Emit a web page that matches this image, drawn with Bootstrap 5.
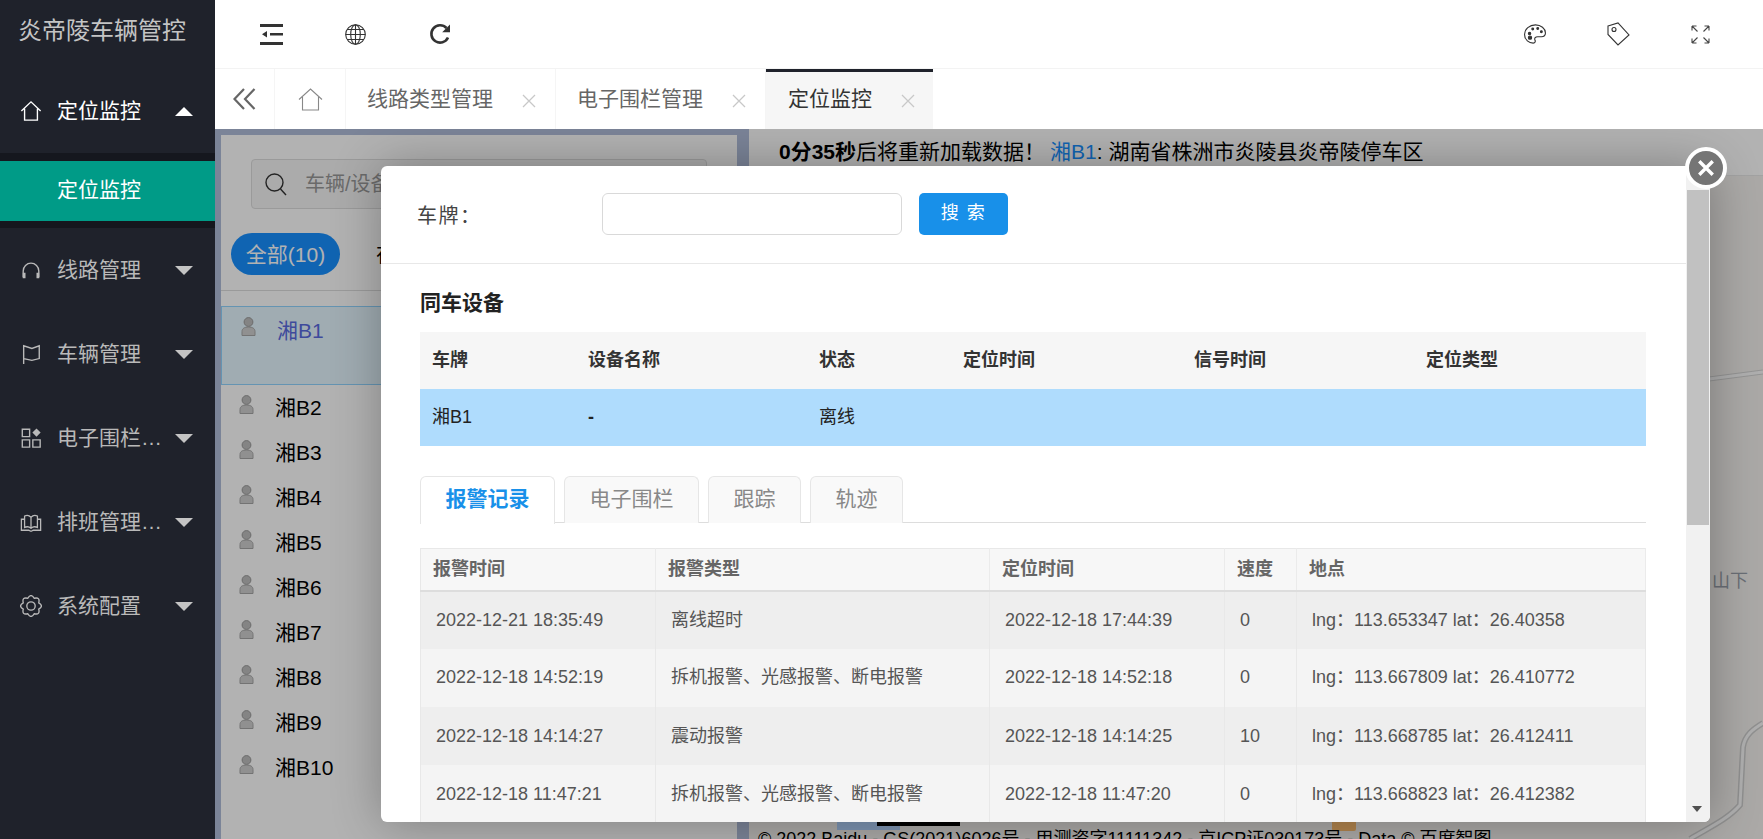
<!DOCTYPE html>
<html lang="zh-CN">
<head>
  <meta charset="UTF-8" />
  <title>炎帝陵车辆管控</title>
  <link href="https://cdn.jsdelivr.net/npm/bootstrap@5.3.3/dist/css/bootstrap.min.css" rel="stylesheet" />
  <style>
    html, body { height: 100%; }
    body {
      font-family: "Liberation Sans", "Noto Sans CJK SC", sans-serif;
      font-size: 18px;
      color: #333;
      overflow: hidden;
      background: #fff;
    }
    svg { display: block; flex: none; }

    /* 侧边栏 */
    .sidebar { width: 215px; flex: none; background: #1f222b; }
    .logo { height: 69px; padding-left: 18px; line-height: 62px; font-size: 24px; color: #c4c4c4; white-space: nowrap; }
    .menu-item { height: 84px; padding: 0 22px 0 20px; color: #b9b9b9; font-size: 21px; }
    .menu-item.open { color: #fff; }
    .menu-item .label { width: 108px; margin-left: 15px; white-space: nowrap; overflow: hidden; text-overflow: ellipsis; }
    .caret { width: 0; height: 0; margin-left: auto; border-left: 9px solid transparent; border-right: 9px solid transparent; border-top: 9px solid #c4c4c4; }
    .caret.up { border-top: 0; border-bottom: 9px solid #fff; }
    .submenu { background: #15171e; padding: 8px 0 7px; }
    .submenu a { display: block; height: 60px; line-height: 58px; padding-left: 57px; background: #009b87; color: #fff; font-size: 21px; text-decoration: none; }

    /* 顶部 */
    .topbar { height: 69px; flex: none; border-bottom: 1px solid #f3f3f3; padding: 0 53px 0 45px; }
    .topbar .tool { width: 84px; }
    .topbar .tool.first { width: 85px; }
    .tabbar { height: 60px; flex: none; font-size: 21px; color: #666; }
    .tabbar .cell { width: 60px; border-right: 1px solid #f5f5f5; }
    .tabbar .cell.home { width: 71px; }
    .page-tab { padding: 0 19px 0 21px; border-right: 1px solid #f5f5f5; white-space: nowrap; }
    .page-tab.active { padding: 0 18px 3px 22px; background: #f6f6f6; color: #333; border-right: 0; border-top: 3px solid #1f222b; }
    .page-tab .x { margin-left: 29px; margin-top: 4px; }

    /* 内容区 */
    .content { background: #b0bdda; min-height: 0; }
    .left-panel { width: 516px; flex: none; margin: 6px 12px -20px 6px; background: #fff; }
    .search-box { margin: 24px 30px 0; height: 50px; padding-left: 13px; background: #f5f5f5; border: 1px solid #ddd; border-radius: 4px; }
    .search-box input { border: 0; background: transparent; padding: 0 0 0 18px; font-size: 20px; box-shadow: none; }
    .search-box input::placeholder { color: #999; }
    .status-pills { margin: 24px 0 0 10px; height: 42px; font-size: 21px; }
    .status-pills .nav-link { padding: 0; color: #000; }
    .status-pills .nav-link.active { width: 109px; height: 42px; line-height: 43px; text-align: center; border-radius: 21px; background: #1890ff; color: #fff; margin-right: 36px; }
    .car-list { margin-top: 15px; border-top: 1px solid #ddd; padding-top: 15px; font-size: 21px; color: #000; }
    .car-row { height: 45px; line-height: 46px; padding-left: 18px; gap: 21px; }
    .car-row svg { margin-top: 10px; }
    .car-row.selected { height: 79px; background: #e6f7ff; border: 1px solid #91d5ff; padding-left: 19px; line-height: 47px; color: #5a6be0; }

    .map-panel { background: #f5f3ef; min-width: 0; }
    .info-bar { height: 47px; line-height: 46px; padding-left: 30px; font-size: 21px; color: #000; background: #fff; border-bottom: 1px solid #e8e8e8; white-space: nowrap; }
    .info-bar a { color: #1890ff; text-decoration: none; margin-left: 5px; }
    .map-label { position: absolute; left: 963px; top: 439px; font-size: 18px; color: #99a0aa; }
    .map-copy { position: absolute; left: 9px; top: 698px; font-size: 18px; line-height: 24px; color: #000; white-space: nowrap; }
    .map-layer { position: absolute; left: 0; top: 0; }

    /* 弹层 */
    .backdrop { position: absolute; inset: 0; background: rgba(0, 0, 0, .3); }
    .dialog {
      position: absolute; left: 166px; top: 37px; width: 1329px; height: 656px;
      background: #fff; border-radius: 6px; box-shadow: 1px 1px 50px rgba(0, 0, 0, .3);
    }
    .dialog-inner { height: 100%; overflow: hidden; border-radius: 6px; }
    .dialog-body { width: 1305px; flex: none; overflow: hidden; }
    .fake-scroll { width: 24px; flex: none; background: #f1f1f1; padding: 24px 1px 0; position: relative; }
    .fake-scroll .thumb { height: 335px; background: #c1c1c1; }
    .fake-scroll .arrow { position: absolute; left: 6px; bottom: 10px; width: 0; height: 0; border-left: 5px solid transparent; border-right: 5px solid transparent; border-top: 6px solid #505050; }
    .close-btn {
      position: absolute; right: -17px; top: -19px; width: 42px; height: 42px; padding: 0;
      background: #757575; border: 4px solid #fff; border-radius: 50%;
    }
    .query-row { height: 98px; padding-left: 36px; border-bottom: 1px solid #e8e8e8; padding-bottom: 2px; }
    .query-row label { width: 185px; margin-top: 4px; font-size: 20px; letter-spacing: 1.5px; color: #444; }
    .query-row input { width: 300px; height: 42px; border: 1px solid #d9d9d9; border-radius: 6px; }
    .query-row .btn { width: 89px; height: 42px; margin-left: 17px; padding: 0; background: #1890e9; border: 0; border-radius: 5px; font-size: 18px; letter-spacing: 1.5px; color: #fff; }
    .section { padding: 0 40px 0 39px; }
    .section h6 { margin: 0; height: 68px; line-height: 77px; font-size: 21px; font-weight: 700; color: #222; }

    .device-table { table-layout: fixed; margin: 0; --bs-table-bg: transparent; }
    .device-table th, .device-table td { height: 57px; padding: 0 12px; vertical-align: middle; border: 0; font-size: 18px; color: #333; }
    .device-table th { background: #f6f6f6; font-weight: 700; }
    .device-table td { background: #afdcfd; color: #222; }
    .c1 { width: 156px; } .c2 { width: 231px; } .c3 { width: 144px; } .c4 { width: 231px; } .c5 { width: 232px; }

    .detail-tabs { margin-top: 30px; height: 47px; gap: 9px; border-bottom: 1px solid #ddd; flex-wrap: nowrap; }
    .detail-tabs .nav-link {
      height: 47px; padding: 0 24.5px; line-height: 44px; font-size: 21px; color: #888;
      background: #f9f9f9; border: 1px solid #e6e6e6; border-bottom: 0; border-radius: 6px 6px 0 0; margin: 0;
    }
    .detail-tabs .nav-link.active { height: 48px; background: #fff; color: #1890e9; font-weight: 700; border-color: #e6e6e6; }

    .alarm-table { table-layout: fixed; margin: 25px 0 0; --bs-table-bg: transparent; border: 1px solid #e8e8e8; }
    .alarm-table th { height: 42px; padding: 0 12px; vertical-align: middle; background: #f7f7f7; font-size: 18px; color: #666; font-weight: 700; border: 0; border-right: 1px solid #ebebeb; border-bottom: 2px solid #ddd; }
    .alarm-table td { height: 58.3px; padding: 0 15px; vertical-align: middle; font-size: 18px; color: #555; border: 0; border-right: 1px solid #e8e8e8; white-space: nowrap; }
    .alarm-table tbody tr:nth-child(odd) td { background: #eee; }
    .alarm-table tbody tr:nth-child(even) td { background: #f4f4f4; }
    .a1 { width: 235px; } .a2 { width: 334px; } .a3 { width: 235px; } .a4 { width: 72px; }
  </style>
</head>
<body>
  <svg width="0" height="0" class="position-absolute">
    <symbol id="person" viewBox="0 0 14 19">
      <circle cx="7" cy="5" r="4.4" fill="#bdbdbd" stroke="#999" />
      <path d="M.5 18.500v-4c0-3 2.500-4.500 6.500-4.500s6.500 1.500 6.500 4.500v4z" fill="#cfcfcf" stroke="#a5a5a5" />
    </symbol>
    <symbol id="tab-x" viewBox="0 0 14 14">
      <path d="M1 1l12 12M13 1L1 13" stroke="#c8c8c8" stroke-width="1.300" fill="none" />
    </symbol>
  </svg>

  <div class="d-flex h-100">
    <aside class="sidebar">
      <div class="logo">炎帝陵车辆管控</div>
      <nav class="d-flex flex-column">
        <div class="menu-item open d-flex align-items-center">
          <svg width="22" height="22" viewBox="0 0 24 24" fill="none" stroke="currentColor" stroke-width="1.500"><path d="M1.500 12L12 2l10.500 10M5 9.500V22h14V9.500" /></svg>
          <span class="label">定位监控</span><span class="caret up"></span>
        </div>
        <div class="submenu"><a href="#">定位监控</a></div>
        <div class="menu-item d-flex align-items-center">
          <svg width="22" height="22" viewBox="0 0 24 24" fill="none" stroke="currentColor" stroke-width="1.500"><path d="M3.500 20v-7a8.500 8.500 0 0 1 17 0v7" /><path d="M3 15h3v6H3zM18 15h3v6h-3z" fill="currentColor" stroke="none" /></svg>
          <span class="label">线路管理</span><span class="caret"></span>
        </div>
        <div class="menu-item d-flex align-items-center">
          <svg width="22" height="22" viewBox="0 0 24 24" fill="none" stroke="currentColor" stroke-width="1.500"><path d="M4 23V3l9 3 8-3v14l-8 2-9-2" /></svg>
          <span class="label">车辆管理</span><span class="caret"></span>
        </div>
        <div class="menu-item d-flex align-items-center">
          <svg width="22" height="22" viewBox="0 0 24 24" fill="none" stroke="currentColor" stroke-width="1.500"><path d="M2.500 2.500h8v8h-8zM2.500 14h8v8h-8zM14 14h8v8h-8z" /><path d="M18 1.500l4.500 4.500-4.500 4.500L13.500 6z" fill="currentColor" stroke="none" /></svg>
          <span class="label">电子围栏管理</span><span class="caret"></span>
        </div>
        <div class="menu-item d-flex align-items-center">
          <svg width="22" height="22" viewBox="0 0 24 24" fill="none" stroke="currentColor" stroke-width="1.400"><path d="M12 7C10 4.500 7 4.500 5 5.500V18c2-1 5-1 7 1 2-2 5-2 7-1V5.500c-2-1-5-1-7 1.500zM12 7v12M5 9H1.500v12h8c1 0 1.500 1 2.500 1s1.500-1 2.500-1h8V9H19" /></svg>
          <span class="label">排班管理配置</span><span class="caret"></span>
        </div>
        <div class="menu-item d-flex align-items-center">
          <svg width="22" height="22" viewBox="1.500 1.500 21 21" fill="none" stroke="currentColor" stroke-width="1.300"><path d="M19.390 8.940Q24.500 12 19.390 15.060 20.840 20.840 15.060 19.390 12 24.500 8.940 19.390 3.160 20.840 4.610 15.060-.5 12 4.610 8.940 3.160 3.160 8.940 4.610 12-.5 15.060 4.610 20.840 3.160 19.390 8.940Z" /><circle cx="12" cy="12" r="4" /></svg>
          <span class="label">系统配置</span><span class="caret"></span>
        </div>
      </nav>
    </aside>

    <main class="flex-grow-1 d-flex flex-column" id="main">
      <header class="topbar d-flex align-items-center">
        <div class="tool first">
          <svg width="23" height="21" viewBox="0 0 23 21" fill="#333"><path d="M0 0h23v3H0zM0 18h23v3H0zM10 9h13v2.500H10zM2 10.300L7 7v6.500z" /></svg>
        </div>
        <div class="tool">
          <svg width="21" height="21" viewBox="0 0 21 21" fill="none" stroke="#333" stroke-width="1.100"><circle cx="10.500" cy="10.500" r="9.800" /><ellipse cx="10.500" cy="10.500" rx="4.800" ry="9.800" /><path d="M10.500.7v19.600M.7 10.500h19.600M2 5.500h17M2 15.500h17" /></svg>
        </div>
        <div class="tool">
          <svg width="23" height="23" viewBox="0 0 23 23" fill="none" stroke="#333" stroke-width="2.600"><path d="M19 14.500A8.700 8.700 0 1 1 17.500 5" /><path d="M21 1.500v7.800h-7.800z" fill="#333" stroke="none" /></svg>
        </div>
        <div class="ms-auto d-flex align-items-center">
          <div class="tool">
            <svg width="24" height="20" viewBox="0 0 25 22" fill="none" stroke="#333" stroke-width="1.200"><path d="M13 1C6.500 1 1 5.500 1 11.500S6 21 10.500 21c2.500 0 2.500-2 2-3-1-2.500.5-4 3-4h4c3 0 4.500-1.500 4.500-4C24 5 19 1 13 1z" /><circle cx="6.500" cy="10.500" r="1.300" fill="#333" /><circle cx="10" cy="5.500" r="1" fill="#333" /><circle cx="15.500" cy="5" r="1" fill="#333" /><circle cx="19.500" cy="8.500" r="1" fill="#333" /><circle cx="7" cy="15" r="1.800" fill="#333" /></svg>
          </div>
          <div class="tool">
            <svg width="23" height="24" viewBox="0 0 23 24" fill="none" stroke="#333" stroke-width="1.100"><path d="M1 4L11 1l11 12-11 10L1 12.500z" /><circle cx="7" cy="7.500" r="2" /></svg>
          </div>
          <svg width="19" height="19" viewBox="0 0 19 19" fill="none" stroke="#444" stroke-width="1.100"><path d="M1 1l5.500 5.500M1 1v4.500M1 1h4.500M18 1l-5.500 5.500M18 1v4.500M18 1h-4.500M1 18l5.500-5.500M1 18v-4.500M1 18h4.500M18 18l-5.500-5.500M18 18v-4.500M18 18h-4.500" /></svg>
        </div>
      </header>

      <div class="tabbar d-flex">
        <div class="cell d-flex align-items-center justify-content-center">
          <svg width="23" height="22" viewBox="0 0 23 22" fill="none" stroke="#666" stroke-width="2.200"><path d="M11 1L1.500 11l9.500 10M21.500 1L12 11l9.500 10" /></svg>
        </div>
        <div class="cell home d-flex align-items-center justify-content-center">
          <svg width="25" height="23" viewBox="0 0 25 23" fill="none" stroke="#888" stroke-width="1.100"><path d="M1 11.500L12.500 1 24 11.500M4.500 9v13h16V9" /></svg>
        </div>
        <div class="page-tab d-flex align-items-center">线路类型管理<svg class="x" width="14" height="14"><use href="#tab-x" /></svg></div>
        <div class="page-tab d-flex align-items-center">电子围栏管理<svg class="x" width="14" height="14"><use href="#tab-x" /></svg></div>
        <div class="page-tab active d-flex align-items-center">定位监控<svg class="x" width="14" height="14"><use href="#tab-x" /></svg></div>
      </div>

      <div class="content flex-grow-1 d-flex position-relative overflow-hidden">
        <section class="left-panel">
          <div class="search-box d-flex align-items-center">
            <svg width="22" height="23" viewBox="0 0 22 23" fill="none" stroke="#333" stroke-width="1.400"><circle cx="9.500" cy="9.500" r="8.500" /><path d="M15.500 16l5.500 6" /></svg>
            <input class="form-control" placeholder="车辆/设备名称" />
          </div>
          <ul class="nav status-pills align-items-center">
            <li class="nav-item"><a class="nav-link active" href="#">全部(10)</a></li>
            <li class="nav-item"><a class="nav-link" href="#">在线(0)</a></li>
          </ul>
          <div class="car-list">
            <div class="car-row selected d-flex"><svg width="15" height="19"><use href="#person" /></svg><span>湘B1</span></div>
            <div class="car-row d-flex"><svg width="15" height="19"><use href="#person" /></svg><span>湘B2</span></div>
            <div class="car-row d-flex"><svg width="15" height="19"><use href="#person" /></svg><span>湘B3</span></div>
            <div class="car-row d-flex"><svg width="15" height="19"><use href="#person" /></svg><span>湘B4</span></div>
            <div class="car-row d-flex"><svg width="15" height="19"><use href="#person" /></svg><span>湘B5</span></div>
            <div class="car-row d-flex"><svg width="15" height="19"><use href="#person" /></svg><span>湘B6</span></div>
            <div class="car-row d-flex"><svg width="15" height="19"><use href="#person" /></svg><span>湘B7</span></div>
            <div class="car-row d-flex"><svg width="15" height="19"><use href="#person" /></svg><span>湘B8</span></div>
            <div class="car-row d-flex"><svg width="15" height="19"><use href="#person" /></svg><span>湘B9</span></div>
            <div class="car-row d-flex"><svg width="15" height="19"><use href="#person" /></svg><span>湘B10</span></div>
          </div>
        </section>

        <section class="map-panel flex-grow-1 position-relative">
          <svg class="map-layer" width="1014" height="710" viewBox="0 0 1014 710" fill="none">
            <path d="M960 250l54-7" stroke="#d4d4d4" stroke-width="5" />
            <path d="M960 250l54-7" stroke="#fbfbfb" stroke-width="3" />
            <path d="M1014 594c-10 6-18 12-20 24l-3 58c-12 14-30 22-50 34" stroke="#cfcfcf" stroke-width="6" />
            <path d="M1014 594c-10 6-18 12-20 24l-3 58c-12 14-30 22-50 34" stroke="#fbfbfb" stroke-width="3" />
            <rect x="88" y="693" width="63" height="8" fill="#b3d4ff" />
            <rect x="128" y="693" width="83" height="4" fill="#000" />
            <rect x="583" y="690" width="24" height="12" rx="2" fill="#ffbf70" />
          </svg>
          <div class="info-bar position-relative"><b>0分35秒</b>后将重新加载数据！<a href="#">湘B1</a>: 湖南省株洲市炎陵县炎帝陵停车区</div>
          <span class="map-label">山下</span>
          <span class="map-copy">© 2022 Baidu - GS(2021)6026号 - 甲测资字11111342 - 京ICP证030173号 - Data © 百度智图</span>
        </section>

        <div class="backdrop"></div>

        <div class="dialog">
          <div class="dialog-inner d-flex">
            <div class="dialog-body">
              <form class="query-row d-flex align-items-center">
                <label>车牌：</label>
                <input class="form-control" />
                <button type="button" class="btn">搜 索</button>
              </form>
              <div class="section">
                <h6>同车设备</h6>
                <table class="table device-table">
                  <colgroup><col class="c1"><col class="c2"><col class="c3"><col class="c4"><col class="c5"><col></colgroup>
                  <thead><tr><th>车牌</th><th>设备名称</th><th>状态</th><th>定位时间</th><th>信号时间</th><th>定位类型</th></tr></thead>
                  <tbody><tr><td>湘B1</td><td><b>-</b></td><td>离线</td><td></td><td></td><td></td></tr></tbody>
                </table>

                <ul class="nav nav-tabs detail-tabs">
                  <li class="nav-item"><a class="nav-link active" href="#">报警记录</a></li>
                  <li class="nav-item"><a class="nav-link" href="#">电子围栏</a></li>
                  <li class="nav-item"><a class="nav-link" href="#">跟踪</a></li>
                  <li class="nav-item"><a class="nav-link" href="#">轨迹</a></li>
                </ul>

                <table class="table alarm-table">
                  <colgroup><col class="a1"><col class="a2"><col class="a3"><col class="a4"><col></colgroup>
                  <thead><tr><th>报警时间</th><th>报警类型</th><th>定位时间</th><th>速度</th><th>地点</th></tr></thead>
                  <tbody>
                    <tr><td>2022-12-21 18:35:49</td><td>离线超时</td><td>2022-12-18 17:44:39</td><td>0</td><td>lng：113.653347 lat：26.40358</td></tr>
                    <tr><td>2022-12-18 14:52:19</td><td>拆机报警、光感报警、断电报警</td><td>2022-12-18 14:52:18</td><td>0</td><td>lng：113.667809 lat：26.410772</td></tr>
                    <tr><td>2022-12-18 14:14:27</td><td>震动报警</td><td>2022-12-18 14:14:25</td><td>10</td><td>lng：113.668785 lat：26.412411</td></tr>
                    <tr><td>2022-12-18 11:47:21</td><td>拆机报警、光感报警、断电报警</td><td>2022-12-18 11:47:20</td><td>0</td><td>lng：113.668823 lat：26.412382</td></tr>
                  </tbody>
                </table>
              </div>
            </div>
            <div class="fake-scroll"><div class="thumb"></div><span class="arrow"></span></div>
          </div>
          <button type="button" class="close-btn d-flex align-items-center justify-content-center" aria-label="关闭">
            <svg width="18" height="18" viewBox="0 0 16 16" fill="none" stroke="#fff" stroke-width="3"><path d="M2 2l12 12M14 2L2 14" /></svg>
          </button>
        </div>
      </div>
    </main>
  </div>

  <script src="https://cdn.jsdelivr.net/npm/bootstrap@5.3.3/dist/js/bootstrap.bundle.min.js"></script>
</body>
</html>
